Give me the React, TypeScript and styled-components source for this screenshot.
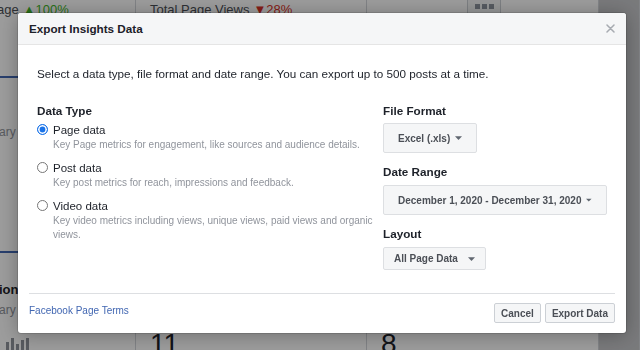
import React from "react";
import styled, { createGlobalStyle } from "styled-components";

const Global = createGlobalStyle`
  html, body { margin: 0; padding: 0; width: 640px; height: 350px; overflow: hidden; }
  body { font-family: "Liberation Sans", Arial, Helvetica, sans-serif; background: #fff; }
  * { box-sizing: border-box; }
`;

/* ---------- background page (dimmed) ---------- */
const Page = styled.div`
  display: flex;
  width: 640px;
  height: 350px;
  overflow: hidden;
  background: #fff;
  color: #4b4f56;
  font-size: 13px;
`;

const Column = styled.div<{ $w: number; $bg?: string }>`
  flex: none;
  width: ${(p) => p.$w}px;
  height: 100%;
  display: flex;
  flex-direction: column;
  overflow: hidden;
  border-right: 1px solid #d3d6db;
  background: ${(p) => p.$bg ?? "#fff"};
`;

const MetricLine = styled.div<{ $indent: number }>`
  padding-top: 3px;
  margin-left: ${(p) => p.$indent}px;
  line-height: 14px;
  white-space: nowrap;
`;

const Up = styled.span`
  color: #42b72a;
  margin-left: 4px;
`;
const Down = styled.span`
  color: #d93025;
  margin-left: 4px;
`;

const ChartLine = styled.div<{ $top: number }>`
  margin-top: ${(p) => p.$top}px;
  height: 2px;
  background: #4267b2;
`;

const SmallDate = styled.div<{ $top: number }>`
  margin-top: ${(p) => p.$top}px;
  margin-left: -1px;
  font-size: 12px;
  line-height: 14px;
  color: #90949c;
  white-space: nowrap;
`;

const BoldLabel = styled.div<{ $top: number }>`
  margin-top: ${(p) => p.$top}px;
  margin-left: -1px;
  font-size: 13px;
  font-weight: bold;
  line-height: 14px;
  color: #1d2129;
  white-space: nowrap;
`;

const MiniBars = styled.div`
  margin-top: 21px;
  margin-left: 6px;
  display: flex;
  align-items: flex-end;
  gap: 2px;
  height: 14px;
`;

const MiniBar = styled.div<{ $h: number }>`
  width: 3px;
  height: ${(p) => p.$h}px;
  background: #90949c;
`;

const BigNumber = styled.div`
  margin-top: auto;
  margin-bottom: -8px;
  padding-left: 14px;
  font-size: 28px;
  line-height: 28px;
  font-weight: 300;
  color: #1d2129;
`;

const IconBox = styled.div`
  margin-left: 100px;
  margin-top: -2px;
  width: 34px;
  height: 17px;
  border: 1px solid #ccd0d5;
  background: #f5f6f7;
  display: flex;
  align-items: flex-end;
  justify-content: center;
  gap: 2px;
  padding-bottom: 5px;
`;

const IconCell = styled.div`
  width: 5px;
  height: 5px;
  background: #8d949e;
`;

const Overlay = styled.div`
  position: fixed;
  inset: 0;
  background: rgba(0, 0, 0, 0.39);
`;

/* ---------- dialog ---------- */
const Dialog = styled.div`
  position: fixed;
  top: 13px;
  left: 18px;
  width: 608px;
  height: 320px;
  background: #fff;
  border-radius: 3px;
  box-shadow: 0 2px 20px rgba(0, 0, 0, 0.3), 0 0 0 1px rgba(0, 0, 0, 0.12);
  display: flex;
  flex-direction: column;
  overflow: hidden;
  color: #1d2129;
`;

const Header = styled.div`
  flex: none;
  height: 32px;
  padding: 0 11px;
  background: #f5f6f7;
  border-bottom: 1px solid #e5e5e5;
  display: flex;
  align-items: center;
  justify-content: space-between;
`;

const Title = styled.h1`
  margin: 0;
  font-size: 11.7px;
  line-height: 14px;
  font-weight: bold;
  color: #1d2129;
`;

const CloseButton = styled.button`
  border: 0;
  padding: 0;
  background: none;
  width: 9px;
  height: 9px;
  display: flex;
  align-items: center;
  justify-content: center;
  cursor: pointer;
`;

const Body = styled.div`
  flex: 1;
  padding: 22px 19px 0;
`;

const Intro = styled.p`
  margin: 0;
  font-size: 11.7px;
  line-height: 14px;
  color: #1d2129;
`;

const Columns = styled.div`
  margin-top: 23px;
  display: grid;
  grid-template-columns: 1fr 224px;
  column-gap: 5px;
`;

const Stack = styled.div`
  display: flex;
  flex-direction: column;
  align-items: flex-start;
`;

const SectionTitle = styled.div<{ $top?: number }>`
  margin-top: ${(p) => p.$top ?? 0}px;
  font-size: 11.7px;
  line-height: 14px;
  font-weight: bold;
  color: #1d2129;
`;

const Option = styled.label<{ $top: number }>`
  margin-top: ${(p) => p.$top}px;
  display: grid;
  grid-template-columns: 11px 1fr;
  column-gap: 5px;
  cursor: pointer;
`;

const RadioMark = styled.span<{ $on: boolean }>`
  width: 11px;
  height: 11px;
  margin-top: 1px;
  border-radius: 50%;
  border: ${(p) => (p.$on ? "1.5px solid #1a73e8" : "1px solid #767676")};
  background: ${(p) => (p.$on ? "#1a73e8" : "#fff")};
  box-shadow: ${(p) => (p.$on ? "inset 0 0 0 1.6px #fff" : "none")};
`;

const OptionLabel = styled.div`
  font-size: 11.5px;
  line-height: 14px;
  color: #1d2129;
`;

const OptionHint = styled.div`
  grid-column: 2;
  margin-top: 1px;
  font-size: 10px;
  line-height: 14px;
  color: #90949c;
`;

const Select = styled.button<{ $h: number; $pl: number; $pr: number; $gap: number; $w?: number; $top: number }>`
  margin-top: ${(p) => p.$top}px;
  height: ${(p) => p.$h}px;
  width: ${(p) => (p.$w ? `${p.$w}px` : "auto")};
  padding: 0 ${(p) => p.$pr}px 0 ${(p) => p.$pl}px;
  display: inline-flex;
  align-items: center;
  gap: ${(p) => p.$gap}px;
  background: #f5f6f7;
  border: 1px solid #dddfe2;
  border-radius: 2px;
  font-family: inherit;
  font-size: 10px;
  font-weight: bold;
  color: #4b4f56;
  white-space: nowrap;
  cursor: pointer;
`;

const Footer = styled.div`
  flex: none;
  margin: 0 11px;
  border-top: 1px solid #dddfe2;
  padding: 9px 0 10px;
  display: flex;
  justify-content: space-between;
  align-items: flex-start;
`;

const TermsLink = styled.a`
  margin-top: 1px;
  font-size: 10px;
  line-height: 14px;
  color: #4267b2;
  text-decoration: none;
`;

const Actions = styled.div`
  display: flex;
  gap: 4px;
`;

const ActionButton = styled.button`
  height: 20px;
  padding: 0 6px;
  background: #f5f6f7;
  border: 1px solid #ccd0d5;
  border-radius: 2px;
  font-family: inherit;
  font-size: 10px;
  font-weight: bold;
  color: #4b4f56;
  cursor: pointer;
`;

const Caret = () => (
  <svg width="7" height="4" viewBox="0 0 7 4" aria-hidden>
    <path d="M0 0.3h7L3.5 3.9z" fill="#606770" />
  </svg>
);

const CloseIcon = () => (
  <svg width="9" height="9" viewBox="0 0 9 9" aria-hidden>
    <path d="M1 1l7 7M8 1L1 8" stroke="#a7abb1" strokeWidth="1.5" strokeLinecap="round" />
  </svg>
);

const options = [
  { label: "Page data", hint: "Key Page metrics for engagement, like sources and audience details.", top: 5 },
  { label: "Post data", hint: "Key post metrics for reach, impressions and feedback.", top: 9 },
  {
    label: "Video data",
    hint: "Key video metrics including views, unique views, paid views and organic views.",
    top: 9,
  },
];

export default function App() {
  const [selected, setSelected] = React.useState(0);
  return (
    <>
      <Global />
      <Page>
        <Column $w={136}>
          <MetricLine $indent={-3}>
            age<Up>▲100%</Up>
          </MetricLine>
          <ChartLine $top={59} />
          <SmallDate $top={47}>ary 1</SmallDate>
          <ChartLine $top={112} />
          <BoldLabel $top={30}>ions</BoldLabel>
          <SmallDate $top={6}>ary 1</SmallDate>
          <MiniBars>
            <MiniBar $h={8} />
            <MiniBar $h={12} />
            <MiniBar $h={6} />
            <MiniBar $h={10} />
            <MiniBar $h={12} />
          </MiniBars>
        </Column>
        <Column $w={231}>
          <MetricLine $indent={14}>
            Total Page Views<Down>▼28%</Down>
          </MetricLine>
          <BigNumber>11</BigNumber>
        </Column>
        <Column $w={232}>
          <IconBox>
            <IconCell />
            <IconCell />
            <IconCell />
          </IconBox>
          <BigNumber>8</BigNumber>
        </Column>
        <Column $w={41} $bg="#c6c7ca" />
      </Page>
      <Overlay />
      <Dialog role="dialog" aria-label="Export Insights Data">
        <Header>
          <Title>Export Insights Data</Title>
          <CloseButton aria-label="Close">
            <CloseIcon />
          </CloseButton>
        </Header>
        <Body>
          <Intro>
            Select a data type, file format and date range. You can export up to 500 posts at a time.
          </Intro>
          <Columns>
            <Stack>
              <SectionTitle>Data Type</SectionTitle>
              {options.map((o, i) => (
                <Option key={o.label} $top={o.top} onClick={() => setSelected(i)}>
                  <RadioMark $on={selected === i} />
                  <OptionLabel>{o.label}</OptionLabel>
                  <OptionHint>{o.hint}</OptionHint>
                </Option>
              ))}
            </Stack>
            <Stack>
              <SectionTitle>File Format</SectionTitle>
              <Select $top={5} $h={30} $pl={14} $pr={14} $gap={5}>
                Excel (.xls) <Caret />
              </Select>
              <SectionTitle $top={12}>Date Range</SectionTitle>
              <Select $top={6} $h={30} $pl={14} $pr={14} $gap={5} $w={224}>
                December 1, 2020 - December 31, 2020 <Caret />
              </Select>
              <SectionTitle $top={12}>Layout</SectionTitle>
              <Select $top={6} $h={23} $pl={10} $pr={10} $gap={10}>
                All Page Data <Caret />
              </Select>
            </Stack>
          </Columns>
        </Body>
        <Footer>
          <TermsLink href="#">Facebook Page Terms</TermsLink>
          <Actions>
            <ActionButton>Cancel</ActionButton>
            <ActionButton>Export Data</ActionButton>
          </Actions>
        </Footer>
      </Dialog>
    </>
  );
}
